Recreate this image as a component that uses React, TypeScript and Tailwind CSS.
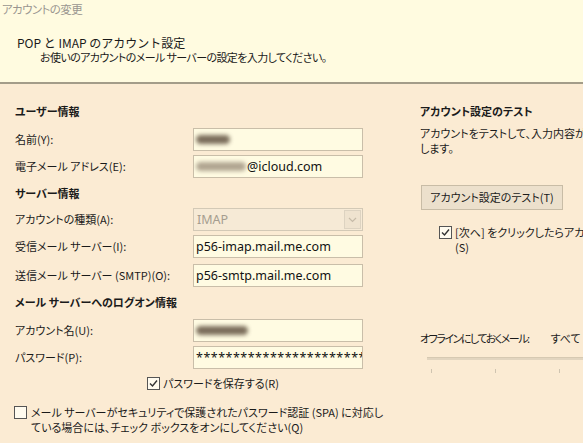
type RowProps = {
  label: string
  h: string
  children?: React.ReactNode
}

function Row({ label, h, children }: RowProps) {
  return (
    <div className={`flex items-center ${h}`}>
      <div className="w-[178px] shrink-0">{label}</div>
      {children}
    </div>
  )
}

function Field({ children }: { children?: React.ReactNode }) {
  return (
    <div className="w-[170px] h-[23px] border border-[#c9bea9] bg-[#fffbe2] flex items-center px-[2px] text-[12.5px] font-['Noto_Sans',sans-serif] text-[#111] overflow-hidden whitespace-nowrap">
      {children}
    </div>
  )
}

function Smudge({ w, dark }: { w: string; dark?: boolean }) {
  return (
    <span className={`inline-block ${w} h-[9px] rounded-full blur-[2px] ${dark ? 'bg-[#5a4a3a] opacity-80' : 'bg-[#7d6d5c] opacity-60'}`} />
  )
}

function Check({ checked }: { checked: boolean }) {
  return (
    <svg width="13" height="13" viewBox="0 0 13 13" className="shrink-0">
      <rect x="0.5" y="0.5" width="12" height="12" fill="#fffbef" stroke="#555" />
      {checked && <path d="M3 6.5 L5.5 9 L10 3.5" fill="none" stroke="#333" strokeWidth="1.4" />}
    </svg>
  )
}

export default function App() {
  return (
    <div className="w-[583px] h-[443px] overflow-hidden bg-[#fbebd3] text-[11px] text-[#1a1a1a] font-['Noto_Sans_CJK_JP',sans-serif] [font-feature-settings:'palt'] leading-[15px]">
      <div className="h-[84px] bg-[#fffbe0] border-b-2 border-[#a39c89] flex flex-col">
        <div className="pl-[2px] pt-[2px] text-[#9a9690] text-[11.5px] tracking-[-0.6px]">アカウントの変更</div>
        <div className="pl-[17px] pt-[18px] text-[12px] [font-feature-settings:normal]">POP と IMAP のアカウント設定</div>
        <div className="pl-[40px] tracking-[-0.6px]">お使いのアカウントのメール サーバーの設定を入力してください。</div>
      </div>

      <div className="flex">
        <div className="w-[405px] shrink-0 pl-[15px] pt-[13px]">
          <div className="h-[28px] flex items-center font-bold">ユーザー情報</div>
          <Row label="名前(Y):" h="h-[28px]">
            <Field><Smudge w="w-[34px]" dark /></Field>
          </Row>
          <Row label="電子メール アドレス(E):" h="h-[27px]">
            <Field><Smudge w="w-[50px]" /><span className="ml-[1px]">@icloud.com</span></Field>
          </Row>
          <div className="h-[27px] flex items-center font-bold">サーバー情報</div>
          <Row label="アカウントの種類(A):" h="h-[25px]">
            <div className="w-[170px] h-[23px] border border-[#d3c9b6] bg-[#f6ead6] flex items-center justify-between">
              <span className="pl-[3px] text-[#a59d8f] font-['Noto_Sans',sans-serif] text-[12.5px]">IMAP</span>
              <span className="w-[17px] h-[19px] mr-[1px] bg-[#efe3cf] border border-[#ddd3c1] flex items-center justify-center">
                <svg width="9" height="6" viewBox="0 0 9 6"><path d="M1 1 L4.5 4.5 L8 1" fill="none" stroke="#c6bba8" strokeWidth="1.2" /></svg>
              </span>
            </div>
          </Row>
          <Row label="受信メール サーバー(I):" h="h-[29px]">
            <Field>p56-imap.mail.me.com</Field>
          </Row>
          <Row label="送信メール サーバー (SMTP)(O):" h="h-[28px]">
            <Field>p56-smtp.mail.me.com</Field>
          </Row>
          <div className="h-[27px] flex items-center font-bold">メール サーバーへのログオン情報</div>
          <Row label="アカウント名(U):" h="h-[28px]">
            <Field><Smudge w="w-[52px]" dark /></Field>
          </Row>
          <Row label="パスワード(P):" h="h-[26px]">
            <Field><span className="tracking-[0.5px]">*************************</span></Field>
          </Row>
          <div className="h-[26px] flex items-center gap-[3px] pl-[132px]">
            <Check checked />
            <span>パスワードを保存する(R)</span>
          </div>
          <div className="mt-[9px] flex items-start gap-[4px] -ml-[1px]">
            <div className="pt-[1px]"><Check checked={false} /></div>
            <div className="whitespace-nowrap">
              <div>メール サーバーがセキュリティで保護されたパスワード認証 (SPA) に対応し</div>
              <div>ている場合には、チェック ボックスをオンにしてください(Q)</div>
            </div>
          </div>
        </div>

        <div className="flex-1 pl-[15px] pt-[13px] whitespace-nowrap">
          <div className="h-[28px] flex items-center font-bold">アカウント設定のテスト</div>
          <div className="pt-[1px]">アカウントをテストして、入力内容が正しいかどうかを確認することをお勧め</div>
          <div>します。</div>
          <div className="mt-[29px] ml-[1px] w-[142px] h-[25px] bg-[#ece0cc] border border-[#c8bca6] flex items-center justify-center">
            アカウント設定のテスト(T)
          </div>
          <div className="mt-[15px] ml-[19px] flex items-start gap-[3px]">
            <div className="pt-[1px]"><Check checked /></div>
            <div>
              <div>[次へ] をクリックしたらアカウント設定を自動的にテストする</div>
              <div>(S)</div>
            </div>
          </div>
          <div className="mt-[76px] flex">
            <span className="tracking-[-1.5px]">オフラインにしておくメール:</span>
            <span className="ml-[22px]">すべて</span>
          </div>
          <div className="mt-[11px] ml-[7px] h-[3px] bg-[#e2d5bf] border-t border-[#d6c9b2]" />
          <div className="mt-[9px] ml-[11px] flex gap-[63px]">
            <span className="w-px h-[4px] bg-[#cfc4b0]" />
            <span className="w-px h-[4px] bg-[#cfc4b0]" />
            <span className="w-px h-[4px] bg-[#cfc4b0]" />
          </div>
        </div>
      </div>
    </div>
  )
}
